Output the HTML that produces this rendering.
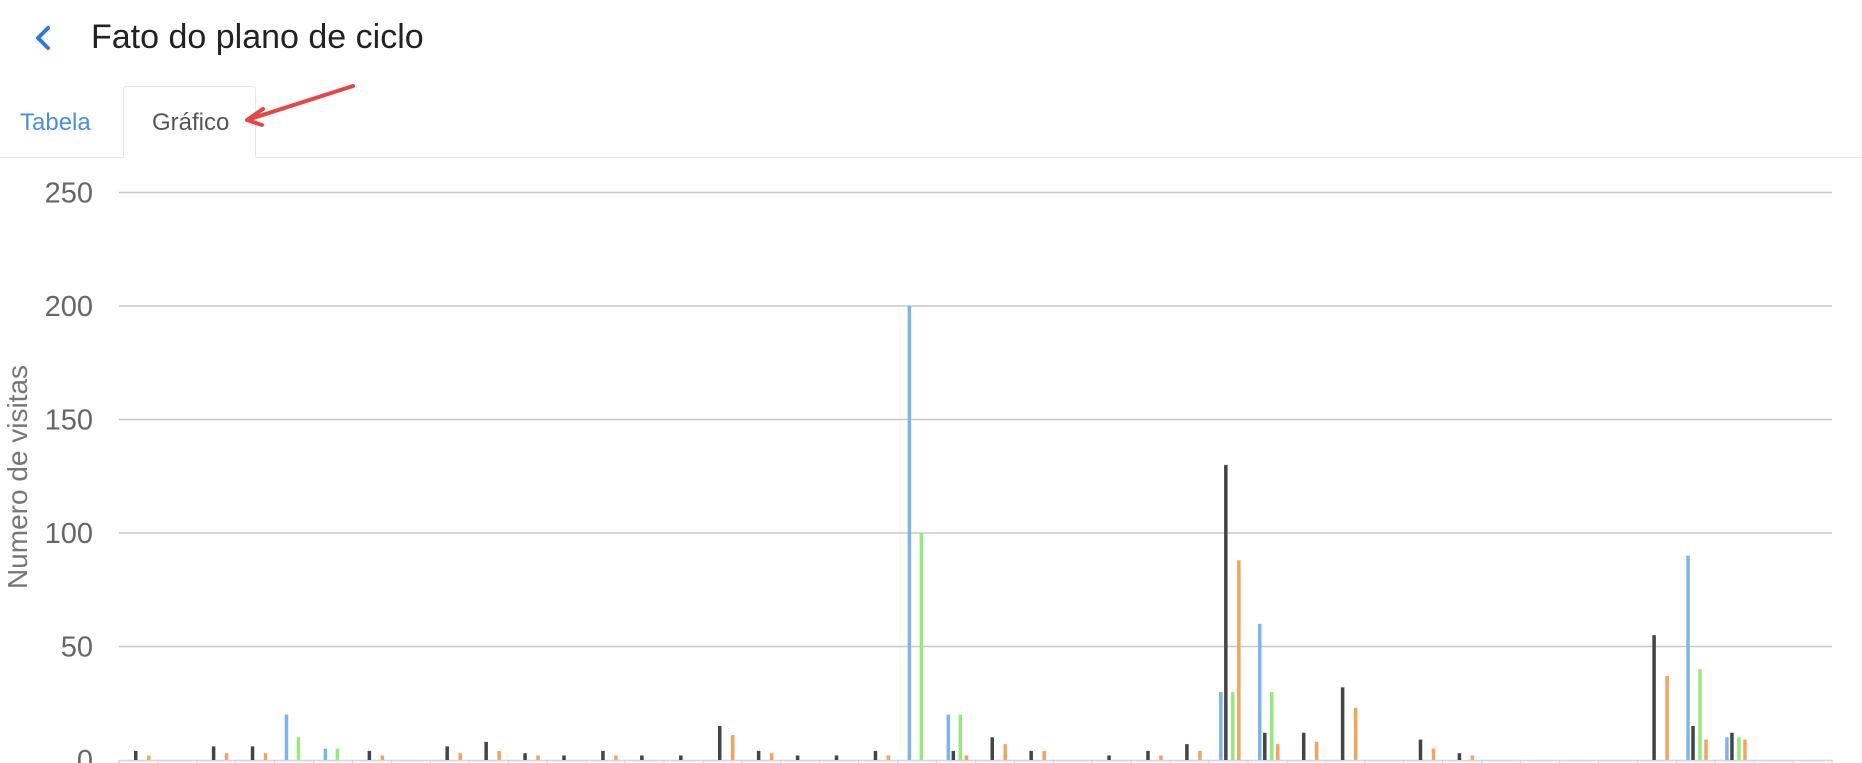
<!DOCTYPE html>
<html><head><meta charset="utf-8"><style>
html,body{margin:0;padding:0;background:#fff;width:1862px;height:763px;overflow:hidden;font-family:"Liberation Sans",sans-serif}
.title{position:absolute;left:91px;top:18px;font-size:34px;color:#222}
.tabline{position:absolute;left:0;top:157px;width:1862px;height:1px;background:#e4e7ed}
.tab{position:absolute;left:123px;top:86px;width:133px;height:72px;border:1px solid #e4e7ed;border-bottom:1px solid #fff;border-radius:4px 4px 0 0;background:#fff;box-sizing:border-box}
.t1{position:absolute;left:20px;top:109px;font-size:24px;color:#4a90d9}
.t2{position:absolute;left:152px;top:109px;font-size:24px;color:#555}
</style></head><body>
<svg style="position:absolute;left:30px;top:24px" width="24" height="28"><path d="M18 4 L8 14 L18 24" fill="none" stroke="#2a7ae2" stroke-width="4" stroke-linecap="round" stroke-linejoin="round"/></svg>
<div class="title">Fato do plano de ciclo</div>
<div class="tabline"></div>
<div class="tab"></div>
<div class="t1">Tabela</div>
<div class="t2">Gráfico</div>
<svg style="position:absolute;left:0;top:0" width="1862" height="763">
<path d="M353 86 L247 120 M247 120 L263 109 M247 120 L262 125" stroke="#e84545" stroke-width="4" stroke-linecap="round" fill="none"/>
<g id="ch"></g>
</svg>
<script>
var g=document.getElementById('ch'),s='';
var y0=760,k=2.27;
for(var v=50;v<=250;v+=50){var y=y0-v*k;s+='<line x1="119" x2="1832" y1="'+y+'" y2="'+y+'" stroke="#c8c8c8" stroke-width="1.5"/>';}
var labs=[0,50,100,150,200,250];
labs.forEach(function(v){var y=y0-v*k+10;s+='<text x="93" y="'+y+'" text-anchor="end" font-size="29" fill="#666" font-family="Liberation Sans,sans-serif">'+v+'</text>';});
s+='<text transform="translate(27,477) rotate(-90)" text-anchor="middle" font-size="28" fill="#777" font-family="Liberation Sans,sans-serif">Numero de visitas</text>';
var W=(1832-119)/44;
for(var i=0;i<=44;i++){var x=119+W*i;s+='<line x1="'+x+'" x2="'+x+'" y1="760" y2="763" stroke="#ccd6eb" stroke-width="1.5"/>';}
s+='<line x1="119" x2="1832" y1="760.5" y2="760.5" stroke="#ccd6eb" stroke-width="1.5"/>';
var off={b:10,k:15,g:22,o:28},col={b:'#7cb5ec',k:'#434348',g:'#90ed7d',o:'#f7a35c'};
var d=[[0,'k',4],[0,'o',2],[2,'k',6],[2,'o',3],[3,'k',6],[3,'o',3],[4,'b',20],[4,'g',10],[5,'b',5],[5,'g',5],[6,'k',4],[6,'o',2],[8,'k',6],[8,'o',3],[9,'k',8],[9,'o',4],[10,'k',3],[10,'o',2],[11,'k',2],[12,'k',4],[12,'o',2],[13,'k',2],[14,'k',2],[15,'k',15],[15,'o',11],[16,'k',4],[16,'o',3],[17,'k',2],[18,'k',2],[19,'k',4],[19,'o',2],[20,'b',200],[20,'g',100],[21,'b',20],[21,'k',4],[21,'g',20],[21,'o',2],[22,'k',10],[22,'o',7],[23,'k',4],[23,'o',4],[25,'k',2],[26,'k',4],[26,'o',2],[27,'k',7],[27,'o',4],[28,'b',30],[28,'k',130],[28,'g',30],[28,'o',88],[29,'b',60],[29,'k',12],[29,'g',30],[29,'o',7],[30,'k',12],[30,'o',8],[31,'k',32],[31,'o',23],[33,'k',9],[33,'o',5],[34,'k',3],[34,'o',2],[39,'k',55],[39,'o',37],[40,'b',90],[40,'k',15],[40,'g',40],[40,'o',9],[41,'b',10],[41,'k',12],[41,'g',10],[41,'o',9]];
d.forEach(function(a){var x=119+W*a[0]+off[a[1]];var h=a[2]*k;s+='<rect x="'+x+'" y="'+(y0-h)+'" width="3.5" height="'+h+'" fill="'+col[a[1]]+'"/>';});
g.innerHTML=s;
</script>
</body></html>
